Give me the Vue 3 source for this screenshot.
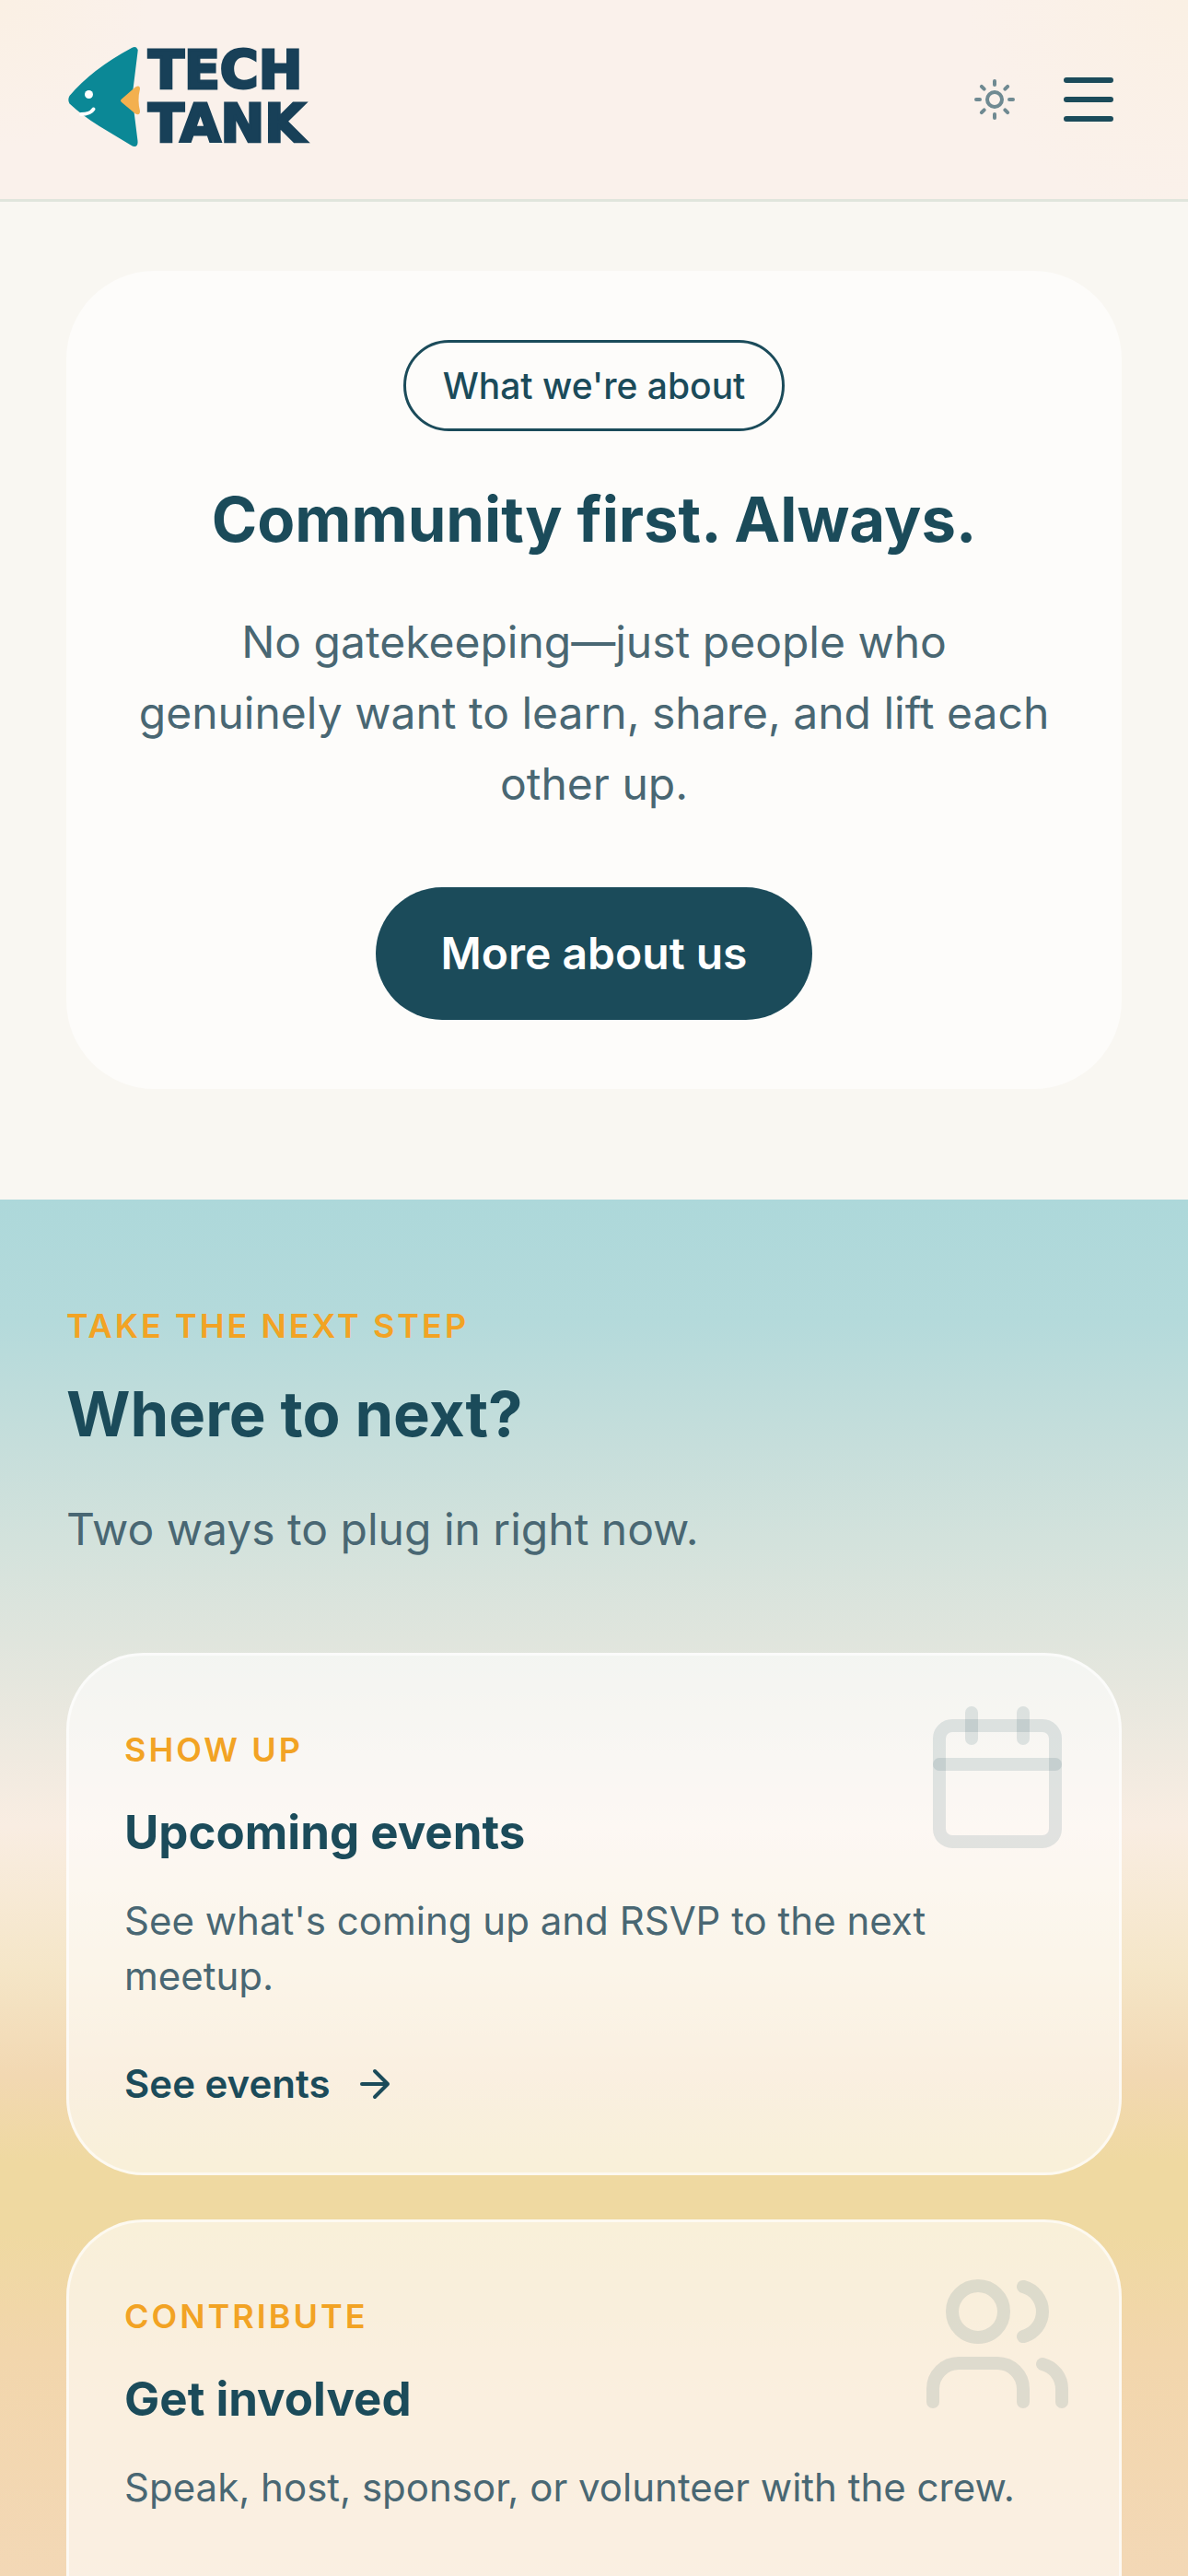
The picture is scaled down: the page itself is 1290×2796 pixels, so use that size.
<template>
  <div class="page">
    <header class="site-header">
      <a href="#" class="brand" aria-label="Tech Tank home">
        <!-- Fish mark -->
        <svg class="brand-mark" viewBox="0 0 81 110" aria-hidden="true">
          <path d="M71 2q3-1.500 5-.500 2 1.500 1.500 5L71.500 55l6 48q.5 5-2.500 6-2 .5-5-1.500L36 87Q18 76 3.500 62.500 1 58.500 3.500 54 28 25 71 2z" fill="#0b8896" />
          <path d="M59.500 58 75 44.500q5-2.500 5 2-3 12 0 24 0 5.500-5 3L60 61q-2-1.500-.5-3z" fill="#f3b04f" />
          <circle cx="24.500" cy="52.500" r="4.500" fill="#fff" />
          <path d="M16 74q10 0 13.500-5.500" fill="none" stroke="#fff" stroke-width="4" stroke-linecap="round" />
        </svg>
        <span class="brand-name"><span>TECH</span><span>TANK</span></span>
      </a>
      <div class="header-actions">
        <button type="button" class="icon-button theme" aria-label="Toggle theme">
          <svg viewBox="0 0 24 24" aria-hidden="true">
            <circle cx="12" cy="12" r="4" />
            <path d="M12 2v2M12 20v2M4.930 4.930l1.410 1.410M17.660 17.660l1.410 1.410M2 12h2M20 12h2M6.340 17.660l-1.410 1.410M19.070 4.930l-1.410 1.410" />
          </svg>
        </button>
        <button type="button" class="icon-button menu" aria-label="Open menu">
          <svg viewBox="0 0 24 24" aria-hidden="true">
            <path d="M4 5h16M4 12h16M4 19h16" />
          </svg>
        </button>
      </div>
    </header>

    <main>
      <!-- About -->
      <section class="about">
        <div class="about-card">
          <span class="pill">What we're about</span>
          <h2 class="title">Community first. Always.</h2>
          <p class="lead">No gatekeeping—just people who genuinely want to learn, share, and lift each other up.</p>
          <a href="#about" class="button-primary">More about us</a>
        </div>
      </section>

      <!-- Next steps -->
      <section class="next">
        <p class="eyebrow">Take the next step</p>
        <h2 class="title">Where to next?</h2>
        <p class="lead">Two ways to plug in right now.</p>

        <div class="cards">
          <article v-for="card in cards" :key="card.title" class="card">
            <svg class="card-icon" viewBox="0 0 24 24" aria-hidden="true">
              <path v-for="d in card.icon" :key="d" :d="d" />
            </svg>
            <p class="eyebrow">{{ card.eyebrow }}</p>
            <h3 class="card-title">{{ card.title }}</h3>
            <p class="card-text">{{ card.text }}</p>
            <a :href="card.href" class="card-link">
              {{ card.link }}
              <svg viewBox="0 0 24 24" aria-hidden="true">
                <path d="M5 12h14M12 5l7 7-7 7" />
              </svg>
            </a>
          </article>
        </div>
      </section>
    </main>
  </div>
</template>

<script setup>
const cards = [
  {
    eyebrow: 'Show up',
    title: 'Upcoming events',
    text: "See what's coming up and RSVP to the next meetup.",
    link: 'See events',
    href: '#events',
    icon: [
      'M5 4h14a2 2 0 0 1 2 2v14a2 2 0 0 1-2 2H5a2 2 0 0 1-2-2V6a2 2 0 0 1 2-2z',
      'M8 2v4',
      'M16 2v4',
      'M3 10h18'
    ]
  },
  {
    eyebrow: 'Contribute',
    title: 'Get involved',
    text: 'Speak, host, sponsor, or volunteer with the crew.',
    link: 'Get involved',
    href: '#contribute',
    icon: [
      'M16 21v-2a4 4 0 0 0-4-4H6a4 4 0 0 0-4 4v2',
      'M13 7a4 4 0 1 1-8 0a4 4 0 0 1 8 0z',
      'M16 3.128a4 4 0 0 1 0 7.744',
      'M22 21v-2a4 4 0 0 0-3-3.870'
    ]
  }
];
</script>

<style>
body {
  margin: 0;
  background: #f9f7f2;
}
</style>

<style scoped>
.page {
  font-family: Inter, 'Liberation Sans', sans-serif;
  color: #1b4b5a;
}

h2,
h3,
p {
  margin: 0;
}

svg {
  display: block;
}

a {
  color: inherit;
  text-decoration: none;
}

/* Header */
.site-header {
  display: flex;
  align-items: center;
  justify-content: space-between;
  height: 216px;
  padding: 0 72px;
  border-bottom: 3px solid #e0e5dc;
  background:
    radial-gradient(circle at 0 0, #faf0e4, transparent 160px),
    radial-gradient(circle at 100% 0, #faf0e4, transparent 240px),
    #faf1eb;
}

.brand {
  display: flex;
  align-items: center;
  gap: 8px;
  padding-bottom: 6px;
}

.brand-mark {
  width: 81px;
  height: 110px;
}

.brand-name {
  display: flex;
  flex-direction: column;
  font-family: 'DejaVu Sans', sans-serif;
  font-size: 57px;
  font-weight: 700;
  line-height: 58px;
  color: #184058;
  -webkit-text-stroke: 3px #184058;
}

.header-actions {
  display: flex;
  align-items: center;
  gap: 42px;
}

.icon-button {
  padding: 0;
  border: 0;
  background: none;
  color: #1b4b5a;
  cursor: pointer;
}

.icon-button svg,
.card-link svg {
  width: 48px;
  height: 48px;
  fill: none;
  stroke: currentColor;
  stroke-width: 2;
  stroke-linecap: round;
  stroke-linejoin: round;
}

.icon-button.theme {
  color: #6f8a92;
}

.icon-button.menu svg {
  width: 72px;
  height: 72px;
}

/* Shared text */
.title {
  font-size: 67px;
  font-weight: 700;
  line-height: 84px;
}

.lead {
  font-size: 48px;
  line-height: 77px;
  color: #496773;
}

.eyebrow {
  font-size: 36px;
  font-weight: 600;
  line-height: 48px;
  letter-spacing: 3px;
  text-transform: uppercase;
  color: #f2a324;
}

/* About */
.about {
  padding: 75px 72px 120px;
}

.about-card {
  display: flex;
  flex-direction: column;
  align-items: center;
  padding: 75px;
  border-radius: 96px;
  background: #fdfcfa;
  text-align: center;
}

.pill {
  padding: 18px 40px;
  border: 3px solid #1b4b5a;
  border-radius: 50px;
  font-size: 39px;
  font-weight: 500;
  line-height: 57px;
}

.about-card .title {
  margin-top: 54px;
}

.about-card .lead {
  margin-top: 52px;
}

.button-primary {
  margin-top: 74px;
  padding: 0 71px;
  border-radius: 72px;
  background: #1b4b5a;
  color: #fff;
  font-size: 48px;
  font-weight: 600;
  line-height: 144px;
}

/* Next steps */
.next {
  padding: 113px 72px 120px;
  background: linear-gradient(180deg, #add8da 0, #b4dadb 130px, #c6dedb 268px, #d3e2dc 370px, #e0e5dd 480px, #f9ede2 680px, #f5e6c8 833px, #f2d8b2 950px, #efd9a1 1045px, #efd9a1 1120px, #f2d6ac 1250px, #f3d8b6 1500px);
}

.next > .title {
  margin-top: 30px;
}

.next > .lead {
  margin-top: 44px;
}

.cards {
  display: grid;
  gap: 48px;
  margin-top: 96px;
}

.card {
  position: relative;
  padding: 78px 60px 66px;
  border: 3px solid rgba(255, 255, 255, 0.6);
  border-radius: 84px;
  background: rgba(255, 255, 255, 0.6);
}

.card-icon {
  position: absolute;
  top: 48px;
  right: 48px;
  width: 168px;
  height: 168px;
  fill: none;
  stroke: #1b4b5a;
  stroke-opacity: 0.12;
  stroke-width: 2;
  stroke-linecap: round;
  stroke-linejoin: round;
}

.card-title {
  margin-top: 30px;
  font-size: 51px;
  font-weight: 700;
  line-height: 72px;
}

.card-text {
  margin-top: 30px;
  font-size: 42px;
  line-height: 60px;
  color: #496773;
}

.card-link {
  display: inline-flex;
  align-items: center;
  gap: 24px;
  margin-top: 57px;
  font-size: 42px;
  font-weight: 600;
  line-height: 60px;
}
</style>
